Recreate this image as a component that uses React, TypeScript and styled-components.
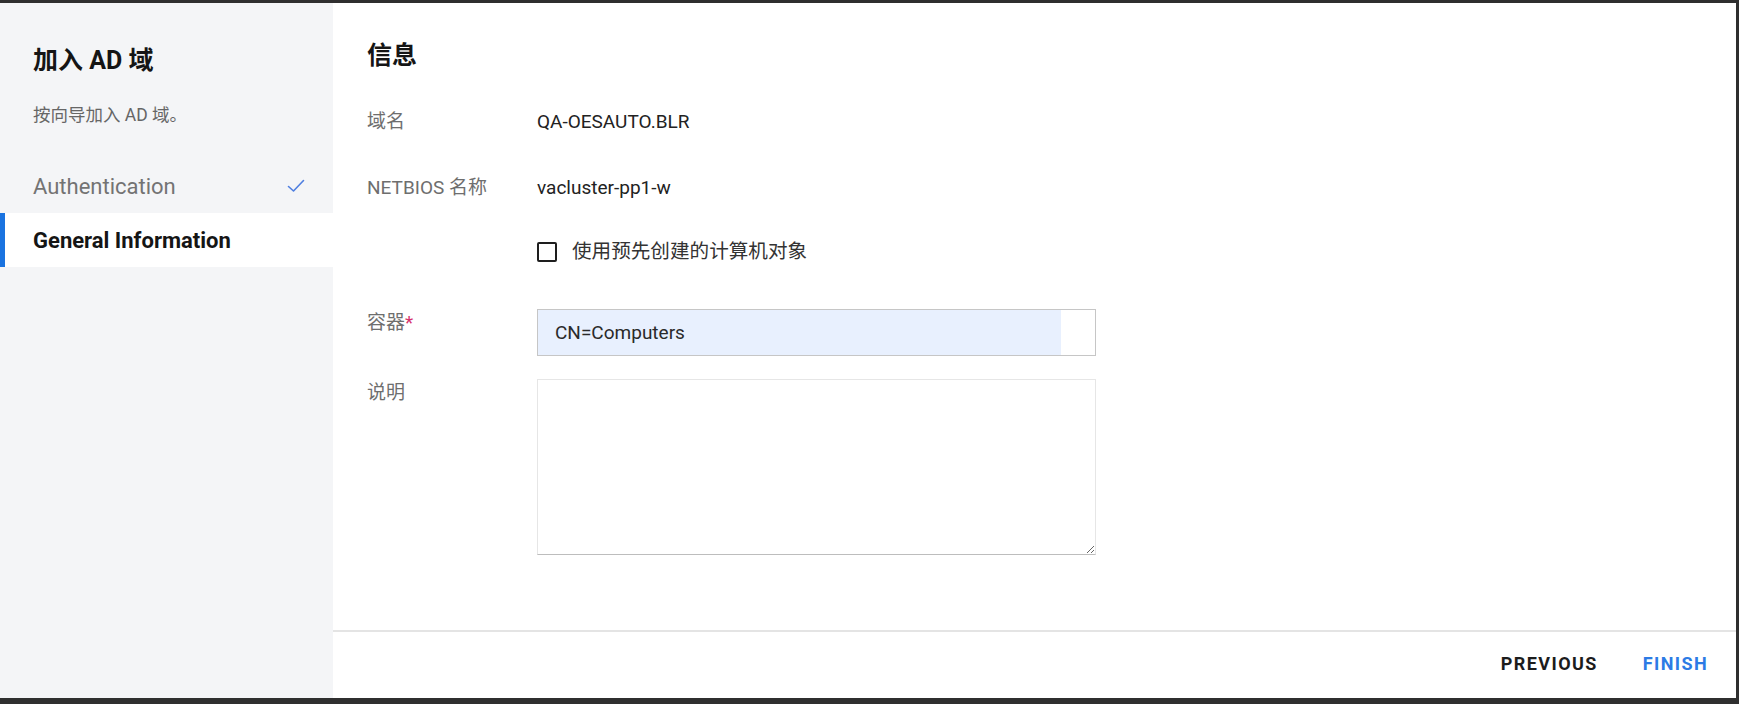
import styled, { createGlobalStyle } from 'styled-components';

const GlobalStyle = createGlobalStyle`
  html, body {
    margin: 0;
    padding: 0;
    background: #2f2f2f;
  }
  body {
    font-family: Roboto, 'Noto Sans CJK SC', sans-serif;
  }
  * {
    box-sizing: border-box;
  }
`;

type Step = { label: string; done?: boolean; active?: boolean };

const steps: Step[] = [
  { label: 'Authentication', done: true },
  { label: 'General Information', active: true },
];

export default function App() {
  return (
    <>
      <GlobalStyle />
      <Frame>
        <Sidebar>
          <SideTitle>加入 AD 域</SideTitle>
          <SideSubtitle>按向导加入 AD 域。</SideSubtitle>
          <StepList>
            {steps.map((s) => (
              <StepItem key={s.label} $active={s.active}>
                <span>{s.label}</span>
                {s.done && (
                  <svg width="18" height="14" viewBox="0 0 18 14" fill="none">
                    <path d="M1.5 7.5 L6.5 12 L16.5 1.5" stroke="#4f7fe0" strokeWidth="1.6" strokeLinecap="round" strokeLinejoin="round" />
                  </svg>
                )}
              </StepItem>
            ))}
          </StepList>
        </Sidebar>

        <Main>
          <Content>
            <PageTitle>信息</PageTitle>

            <InfoRow>
              <Label>域名</Label>
              <Value>QA-OESAUTO.BLR</Value>
            </InfoRow>
            <InfoRow $gap={42}>
              <Label>NETBIOS 名称</Label>
              <Value>vacluster-pp1-w</Value>
            </InfoRow>

            <InfoRow $gap={40}>
              <Label />
              <CheckLabel>
                <CheckBox />
                使用预先创建的计算机对象
              </CheckLabel>
            </InfoRow>

            <FieldRow $gap={45}>
              <FieldLabel>
                容器<Required>*</Required>
              </FieldLabel>
              <InputBox>
                <Autofilled>CN=Computers</Autofilled>
                <InputTail />
              </InputBox>
            </FieldRow>

            <FieldRow $gap={23}>
              <FieldLabel>说明</FieldLabel>
              <TextArea />
            </FieldRow>
          </Content>

          <Footer>
            <FooterButton>PREVIOUS</FooterButton>
            <FooterButton $primary>FINISH</FooterButton>
          </Footer>
        </Main>
      </Frame>
    </>
  );
}

const Frame = styled.div`
  display: flex;
  width: 1736px;
  height: 695px;
  margin-top: 3px;
  background: #fff;
`;

const Sidebar = styled.aside`
  width: 333px;
  flex-shrink: 0;
  background: #f4f5f7;
  padding-top: 43px;
`;

const SideTitle = styled.h1`
  margin: 0;
  padding-left: 33px;
  font-size: 25px;
  line-height: 30px;
  font-weight: 700;
  color: #151515;
`;

const SideSubtitle = styled.p`
  margin: 27px 0 0;
  padding-left: 33px;
  font-size: 17.5px;
  line-height: 24px;
  color: #666;
`;

const StepList = styled.ul`
  list-style: none;
  margin: 32px 0 0;
  padding: 0;
`;

const StepItem = styled.li<{ $active?: boolean }>`
  display: flex;
  align-items: center;
  justify-content: space-between;
  height: 54px;
  padding: 0 28px 0 33px;
  font-size: 22px;
  font-weight: ${({ $active }) => ($active ? 700 : 400)};
  color: ${({ $active }) => ($active ? '#151515' : '#737373')};
  background: ${({ $active }) => ($active ? '#fff' : 'transparent')};
  box-shadow: ${({ $active }) => ($active ? 'inset 5px 0 0 #1a73e0' : 'none')};
`;

const Main = styled.main`
  flex: 1;
  display: flex;
  flex-direction: column;
  min-width: 0;
`;

const Content = styled.div`
  flex: 1;
  padding: 38px 0 0 34px;
`;

const PageTitle = styled.h2`
  margin: 0;
  font-size: 25px;
  line-height: 30px;
  font-weight: 700;
  color: #151515;
`;

const InfoRow = styled.div<{ $gap?: number }>`
  display: flex;
  align-items: center;
  margin-top: ${({ $gap }) => $gap ?? 39}px;
  font-size: 19px;
  line-height: 24px;
`;

const Label = styled.div`
  width: 170px;
  flex-shrink: 0;
  color: #6e6e6e;
`;

const Value = styled.div`
  color: #222;
`;

const CheckLabel = styled.label`
  display: flex;
  align-items: center;
  gap: 15px;
  font-size: 19.6px;
  color: #333;
`;

const CheckBox = styled.span`
  width: 20px;
  height: 20px;
  border: 2px solid #1e1e1e;
  border-radius: 2px;
  background: #fff;
`;

const FieldRow = styled.div<{ $gap?: number }>`
  display: flex;
  align-items: flex-start;
  margin-top: ${({ $gap }) => $gap ?? 24}px;
`;

const FieldLabel = styled.div`
  width: 170px;
  flex-shrink: 0;
  padding-top: 2px;
  font-size: 19px;
  line-height: 24px;
  color: #6e6e6e;
`;

const Required = styled.span`
  color: #d6336c;
`;

const InputBox = styled.div`
  display: flex;
  width: 559px;
  height: 47px;
  border: 1.5px solid #c6c6c6;
`;

const Autofilled = styled.div`
  flex: 1;
  display: flex;
  align-items: center;
  padding-left: 17px;
  background: #e8f0fe;
  font-size: 19px;
  color: #2a2a2a;
`;

const InputTail = styled.div`
  width: 34px;
  background: #fff;
`;

const TextArea = styled.textarea`
  width: 559px;
  height: 176px;
  margin: 0;
  border: 1.5px solid #e6e6e6;
  border-bottom-color: #bdbdbd;
  resize: both;
  outline: none;
  font-family: inherit;
  font-size: 19px;
`;

const Footer = styled.footer`
  display: flex;
  align-items: center;
  justify-content: flex-end;
  gap: 45px;
  height: 68px;
  padding: 0 28px 4px 0;
  border-top: 2px solid #e4e4e4;
`;

const FooterButton = styled.button<{ $primary?: boolean }>`
  border: none;
  background: none;
  padding: 0;
  cursor: pointer;
  font-family: Roboto, sans-serif;
  font-size: 18px;
  font-weight: 700;
  letter-spacing: 1.4px;
  color: ${({ $primary }) => ($primary ? '#2c7be5' : '#1c1c1c')};
`;
